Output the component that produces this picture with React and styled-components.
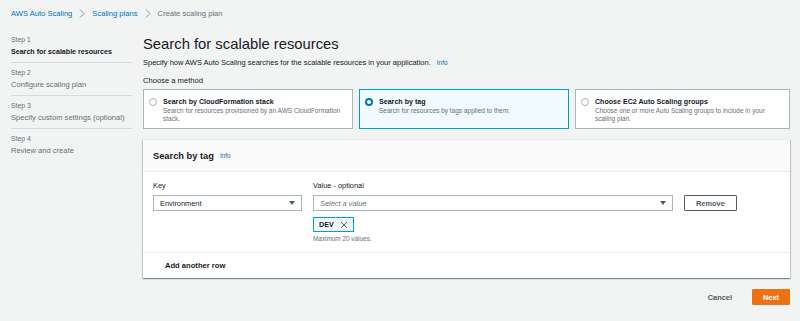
import { createGlobalStyle, styled } from "styled-components";

const GlobalStyle = createGlobalStyle`
  html, body {
    margin: 0;
    background: #f2f3f3;
    font-family: "Liberation Sans", Arial, sans-serif;
    color: #16191f;
  }
  * {
    box-sizing: border-box;
  }
`;

const Page = styled.div`
  padding: 0 10px 0 11px;
  height: 321px;
  overflow: hidden;
`;

const Breadcrumbs = styled.nav`
  display: flex;
  align-items: center;
  gap: 7px;
  height: 27px;
  font-size: 7.6px;
`;

const Crumb = styled.span`
  color: ${(p) => (p.$current ? "#687078" : "#0073bb")};
`;

const Chevron = styled.svg`
  width: 6px;
  height: 9px;
  stroke: #879596;
  fill: none;
  stroke-width: 1;
`;

const Layout = styled.div`
  display: flex;
  gap: 11px;
  padding-top: 7px;
`;

const StepNav = styled.ol`
  list-style: none;
  margin: 0;
  padding: 0;
  width: 121px;
  flex-shrink: 0;
`;

const StepItem = styled.li`
  padding: 0 0 4px;
  border-bottom: ${(p) => (p.$last ? "none" : "1px solid #d5dbdb")};
  margin-bottom: 4px;
`;

const StepLabel = styled.div`
  font-size: 6.8px;
  line-height: 12px;
  color: #687078;
`;

const StepTitle = styled.div`
  font-size: ${(p) => (p.$active ? "7.1px" : "7.6px")};
  line-height: 12px;
  color: ${(p) => (p.$active ? "#16191f" : "#687078")};
  font-weight: ${(p) => (p.$active ? 700 : 400)};
`;

const Main = styled.main`
  flex: 1;
  display: flex;
  flex-direction: column;
`;

const Title = styled.h1`
  margin: 0;
  font-size: 14.8px;
  font-weight: 400;
  line-height: 20px;
`;

const Subtitle = styled.p`
  margin: 3px 0 0;
  font-size: 7.5px;
  line-height: 12px;
  display: flex;
  align-items: baseline;
  gap: 6px;
`;

const InfoLink = styled.span`
  color: #0073bb;
  font-size: 6.4px;
  font-weight: 400;
`;

const MethodLabel = styled.div`
  margin-top: 6px;
  font-size: 7.6px;
  line-height: 12px;
`;

const Methods = styled.div`
  display: grid;
  grid-template-columns: 210px 210px 1fr;
  gap: 6px;
  margin-top: 2px;
`;

const MethodCard = styled.div`
  height: 40px;
  display: flex;
  gap: 6px;
  padding: 7px 8px 0 5px;
  background: ${(p) => (p.$selected ? "#f1faff" : "#ffffff")};
  border: 1px solid ${(p) => (p.$selected ? "#00a1c9" : "#aab7b8")};
`;

const Radio = styled.span`
  width: 8px;
  height: 8px;
  margin-top: 1px;
  border-radius: 50%;
  flex-shrink: 0;
  background: #ffffff;
  border: ${(p) => (p.$checked ? "2.5px solid #0073bb" : "1px solid #aab7b8")};
`;

const MethodText = styled.div`
  display: flex;
  flex-direction: column;
`;

const MethodTitle = styled.div`
  font-size: 7.1px;
  font-weight: 700;
  line-height: 10px;
`;

const MethodDesc = styled.div`
  font-size: 6.5px;
  line-height: 8px;
  color: #687078;
`;

const Panel = styled.section`
  margin-top: 10px;
  background: #ffffff;
  border-top: 1px solid #eaeded;
  box-shadow: 0 1px 1px 0 rgba(0, 28, 36, 0.3), 1px 1px 1px 0 rgba(0, 28, 36, 0.15),
    -1px 1px 1px 0 rgba(0, 28, 36, 0.15);
`;

const PanelHeader = styled.header`
  height: 32px;
  display: flex;
  align-items: center;
  gap: 6px;
  padding: 0 10px;
  background: #fafafa;
  border-bottom: 1px solid #eaeded;
`;

const PanelTitle = styled.h2`
  margin: 0;
  font-size: 9.3px;
  font-weight: 700;
`;

const TagRow = styled.div`
  display: grid;
  grid-template-columns: 149px 360px auto;
  column-gap: 11px;
  align-items: start;
  padding: 9px 10px 9px;
  border-bottom: 1px solid #eaeded;
`;

const Field = styled.div`
  display: flex;
  flex-direction: column;
`;

const FieldLabel = styled.label`
  font-size: 7.4px;
  line-height: 10px;
  margin-bottom: 4px;
`;

const Select = styled.div`
  height: 16px;
  display: flex;
  align-items: center;
  justify-content: space-between;
  padding: 0 6px;
  border: 1px solid #aab7b8;
  background: #ffffff;
  font-size: 7.4px;
  color: ${(p) => (p.$placeholder ? "#687078" : "#16191f")};
  font-style: ${(p) => (p.$placeholder ? "italic" : "normal")};
`;

const Caret = styled.svg`
  width: 6px;
  height: 4px;
  fill: #545b64;
`;

const Token = styled.div`
  margin-top: 6px;
  align-self: flex-start;
  height: 15px;
  display: flex;
  align-items: center;
  gap: 6px;
  padding: 0 5px;
  border: 1px solid #00a1c9;
  background: #f1faff;
  font-size: 7.2px;
  font-weight: 700;
`;

const Hint = styled.div`
  margin-top: 3px;
  font-size: 6.4px;
  line-height: 8px;
  color: #687078;
`;

const Button = styled.button`
  height: 16px;
  padding: 0 ${(p) => (p.$primary ? "10px" : "11px")};
  font-family: inherit;
  font-size: 7.4px;
  font-weight: 700;
  cursor: pointer;
  color: ${(p) => (p.$primary ? "#ffffff" : "#545b64")};
  background: ${(p) => (p.$primary ? "#ec7211" : p.$plain ? "transparent" : "#ffffff")};
  border: 1px solid ${(p) => (p.$primary ? "#ec7211" : p.$plain ? "transparent" : "#545b64")};
  border-radius: 1px;
`;

const RemoveWrap = styled.div`
  display: flex;
  padding-top: 14px;
`;

const AddRow = styled.div`
  height: 25px;
  display: flex;
  align-items: center;
  padding-left: 22px;
  font-size: 7.6px;
  font-weight: 700;
  color: #16191f;
`;

const Footer = styled.div`
  display: flex;
  justify-content: flex-end;
  align-items: center;
  gap: 8px;
  margin-top: 11px;
`;

const steps = [
  "Search for scalable resources",
  "Configure scaling plan",
  "Specify custom settings (optional)",
  "Review and create",
];

const methods = [
  {
    title: "Search by CloudFormation stack",
    desc: "Search for resources provisioned by an AWS CloudFormation stack.",
  },
  {
    title: "Search by tag",
    desc: "Search for resources by tags applied to them.",
    selected: true,
  },
  {
    title: "Choose EC2 Auto Scaling groups",
    desc: "Choose one or more Auto Scaling groups to include in your scaling plan.",
  },
];

function ChevronIcon() {
  return (
    <Chevron viewBox="0 0 6 9">
      <path d="M1 0.5 L5 4.5 L1 8.5" />
    </Chevron>
  );
}

function CaretIcon() {
  return (
    <Caret viewBox="0 0 6 4">
      <path d="M0 0 H6 L3 4 Z" />
    </Caret>
  );
}

function App() {
  return (
    <>
      <GlobalStyle />
      <Page>
        <Breadcrumbs>
          <Crumb>AWS Auto Scaling</Crumb>
          <ChevronIcon />
          <Crumb>Scaling plans</Crumb>
          <ChevronIcon />
          <Crumb $current>Create scaling plan</Crumb>
        </Breadcrumbs>
        <Layout>
          <StepNav>
            {steps.map((s, i) => (
              <StepItem key={s} $last={i === steps.length - 1}>
                <StepLabel>Step {i + 1}</StepLabel>
                <StepTitle $active={i === 0}>{s}</StepTitle>
              </StepItem>
            ))}
          </StepNav>
          <Main>
            <Title>Search for scalable resources</Title>
            <Subtitle>
              Specify how AWS Auto Scaling searches for the scalable resources in your
              application.
              <InfoLink>Info</InfoLink>
            </Subtitle>
            <MethodLabel>Choose a method</MethodLabel>
            <Methods>
              {methods.map((m) => (
                <MethodCard key={m.title} $selected={m.selected}>
                  <Radio $checked={m.selected} />
                  <MethodText>
                    <MethodTitle>{m.title}</MethodTitle>
                    <MethodDesc>{m.desc}</MethodDesc>
                  </MethodText>
                </MethodCard>
              ))}
            </Methods>
            <Panel>
              <PanelHeader>
                <PanelTitle>Search by tag</PanelTitle>
                <InfoLink>Info</InfoLink>
              </PanelHeader>
              <TagRow>
                <Field>
                  <FieldLabel>Key</FieldLabel>
                  <Select>
                    Environment
                    <CaretIcon />
                  </Select>
                </Field>
                <Field>
                  <FieldLabel>Value - optional</FieldLabel>
                  <Select $placeholder>
                    Select a value
                    <CaretIcon />
                  </Select>
                  <Token>
                    DEV
                    <svg width="8" height="8" viewBox="0 0 8 8" stroke="#545b64" strokeWidth="1">
                      <path d="M1 1 L7 7 M7 1 L1 7" />
                    </svg>
                  </Token>
                  <Hint>Maximum 20 values.</Hint>
                </Field>
                <RemoveWrap>
                  <Button>Remove</Button>
                </RemoveWrap>
              </TagRow>
              <AddRow>Add another row</AddRow>
            </Panel>
            <Footer>
              <Button $plain>Cancel</Button>
              <Button $primary>Next</Button>
            </Footer>
          </Main>
        </Layout>
      </Page>
    </>
  );
}

export default App;
